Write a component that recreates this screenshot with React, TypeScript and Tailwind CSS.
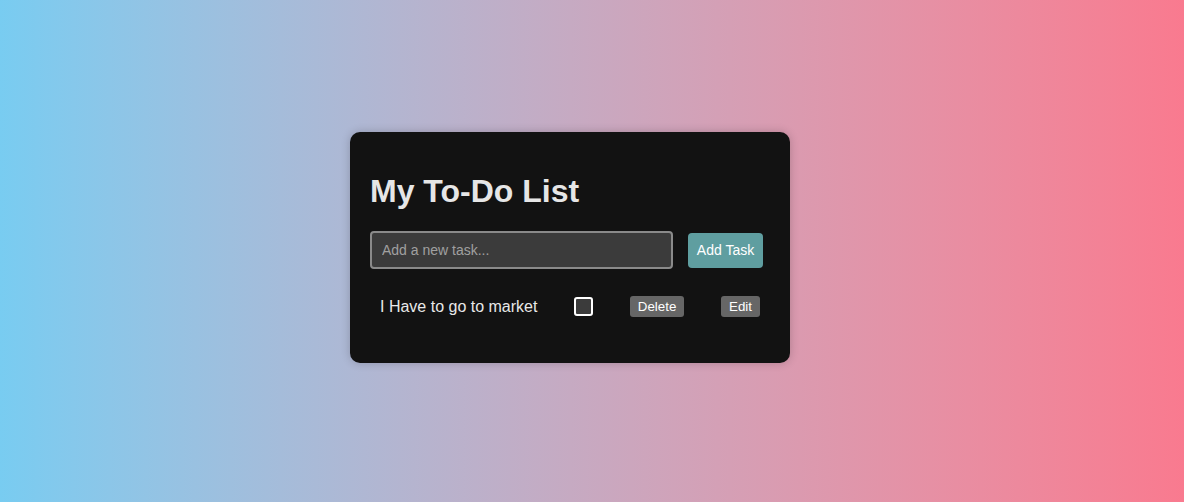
export default function App() {
  return (
    <div className="min-h-screen w-full bg-gradient-to-r from-[#78ccf1] to-[#f97a8f] flex items-center justify-center font-['Liberation_Sans',Arial,sans-serif]">
      <div className="mr-[44px] mb-[7px] w-[440px] rounded-[10px] bg-[#121212] p-5 shadow-[0_0_10px_rgba(0,0,0,0.2)]">
        <h1 className="my-[21px] text-[32px] font-bold leading-[37px] text-[#e6e6e6]">
          My To-Do List
        </h1>
        <div className="flex items-center gap-[15px]">
          <input
            type="text"
            placeholder="Add a new task..."
            className="h-[38px] w-[303px] rounded-[4px] border-2 border-[#8a8a8a] bg-[#3b3b3b] px-[10px] text-[14px] text-white placeholder:text-[#a0a0a0] outline-none"
          />
          <button className="h-[35px] w-[75px] rounded-[4px] bg-[#5f9ea0] text-[14px] text-white">
            Add Task
          </button>
        </div>
        <ul className="mt-[17px] mb-4">
          <li className="flex h-[41px] w-[400px] items-center justify-between px-[10px] leading-[18px]">
            <span className="text-[16px] text-[#e8e8e8]">I Have to go to market</span>
            <span className="block h-[19px] w-[19px] rounded-[3px] border-2 border-white bg-[#3b3b3b]" />
            <button className="h-[21px] rounded-[3px] bg-[#666666] px-2 text-[13.33px] leading-[15px] text-white">
              Delete
            </button>
            <button className="h-[21px] rounded-[3px] bg-[#666666] px-2 text-[13.33px] leading-[15px] text-white">
              Edit
            </button>
          </li>
        </ul>
      </div>
    </div>
  );
}
